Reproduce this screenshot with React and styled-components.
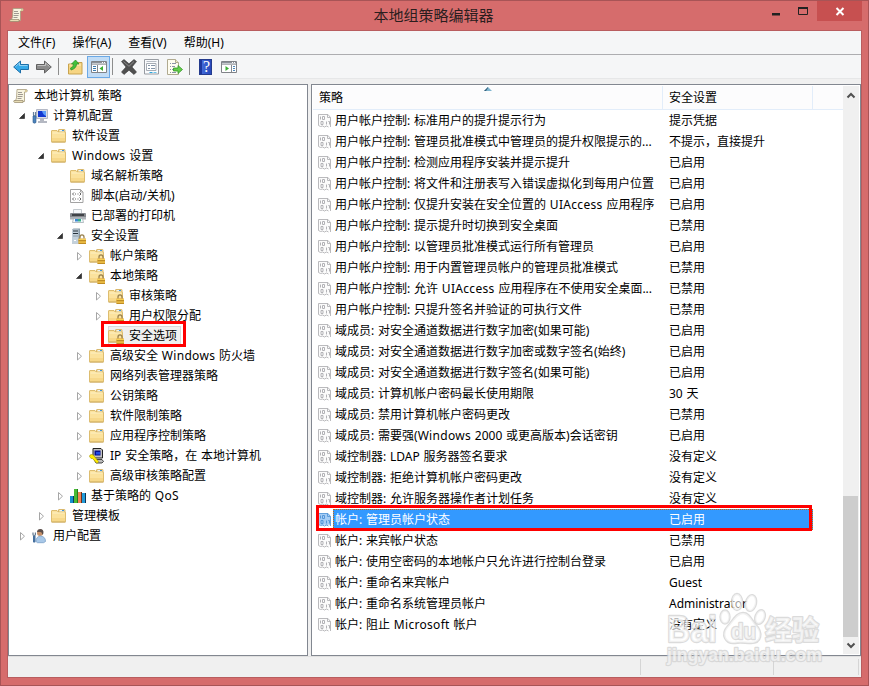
import React, { useState } from 'react';
import styled, { createGlobalStyle } from 'styled-components';

const GlobalStyle = createGlobalStyle`
    * {
        box-sizing: border-box;
    }

    body {
        margin: 0;
        overflow: hidden;
    }
`;

const Window = styled.div`
    position: relative;
    display: flex;
    flex-direction: column;
    width: 869px;
    height: 686px;
    padding: 0 6px 7px;
    background: #d66c6c;
    border: 1px solid #a85456;
    color: #000;
    font-family: "Noto Sans", "Noto Sans CJK SC", sans-serif;
    font-size: 12px;
    word-spacing: 0.7px;
    cursor: default;
`;

const TitleBar = styled.div`
    display: flex;
    flex: none;
    height: 29px;
    padding-left: 2px;
`;

const TitleIcon = styled.div`
    width: 92px;
    padding-top: 6px;
`;

const Title = styled.div`
    flex: 1;
    padding-left: 5px;
    color: #2b1e1e;
    font-size: 15px;
    line-height: 29px;
    text-align: center;
`;

const Controls = styled.div`
    display: flex;
    align-items: flex-start;
    width: 101px;
`;

const ControlButton = styled.div`
    display: flex;
    width: ${props => props.width}px;
    height: 20px;
    background: ${props => props.close ? '#c75050' : 'transparent'};
`;

const Client = styled.div`
    display: flex;
    flex: 1;
    flex-direction: column;
    min-height: 0;
    background: #f0f0f0;
    border: 1px solid #b95d5f;
`;

const MenuBar = styled.div`
    display: flex;
    flex: none;
    gap: 17px;
    height: 24px;
    padding-left: 10px;
    background: #f5f6f7;
    border-bottom: 1px solid #adadb0;
    line-height: 23px;
`;

const ToolBar = styled.div`
    display: flex;
    flex: none;
    align-items: center;
    height: 23px;
    margin-bottom: 6px;
    padding-left: 5px;
    background: #f5f6f7;
    box-shadow: 0 1px 0 #e6e7e8;
`;

const History = styled.div`
    display: flex;
    gap: 7px;
`;

const ToolButton = styled.div`
    display: flex;
    align-items: center;
    justify-content: center;
    width: 23px;
    height: 22px;
    margin-top: 1px;
    background: ${props => props.active ? '#c2dcf5' : 'transparent'};
    border: 1px solid ${props => props.active ? '#6ba9e6' : 'transparent'};
`;

const Separator = styled.div`
    width: 1px;
    height: 17px;
    margin: 0 ${props => props.right}px 0 ${props => props.left}px;
    background: #8d8d8d;
`;

const Panels = styled.div`
    display: flex;
    flex: none;
    gap: 3px;
    height: 572px;
`;

const Tree = styled.div`
    width: 300px;
    padding-top: 1px;
    background: #fff;
    border: 1px solid #828790;
`;

const TreeRow = styled.div`
    display: flex;
    align-items: center;
    height: 20px;
    padding-left: ${props => props.level ? props.level * 19 - 12 : 4}px;
`;

const Expander = styled.div`
    display: flex;
    flex: none;
    width: 16px;
    height: 16px;
`;

const TreeItem = styled.div`
    position: relative;
    display: flex;
    align-items: center;
    gap: 5px;
    height: 20px;
    line-height: 18px;
    padding-right: 4px;
    white-space: nowrap;
    background: ${props => props.selected ? '#f0f0f0' : 'transparent'};
    box-shadow: ${props => props.selected ? 'inset 0 0 0 1px #dadada' : 'none'};
`;

const Latin = styled.span`
    letter-spacing: 0.3px;
`;

// Red frame drawn over the highlighted entries
const Mark = styled.div`
    position: absolute;
    top: ${props => props.top}px;
    right: ${props => props.right}px;
    bottom: ${props => props.bottom}px;
    left: ${props => props.left}px;
    border: 3px solid #fe0000;
    pointer-events: none;
`;

const ListPanel = styled.div`
    display: flex;
    width: 550px;
    padding: 1px;
    background: #fff;
    border: 1px solid #828790;
`;

const List = styled.div`
    width: 530px;
`;

const ListHeader = styled.div`
    position: relative;
    display: flex;
    height: 24px;
    background: #fcfcfd;
    border-bottom: 1px solid #e2edfa;
    line-height: 24px;
`;

const HeaderCell = styled.div`
    width: ${props => props.width}px;
    padding-left: 6px;
    border-right: 1px solid #e2edfa;
`;

const SortMark = styled.svg`
    position: absolute;
    top: 1px;
    left: 171px;
`;

const Row = styled.div`
    position: relative;
    display: flex;
    align-items: center;
    height: 21px;
    padding-left: 5px;
    line-height: 19px;
`;

const RowBody = styled.div`
    display: flex;
    flex: none;
    align-items: center;
    width: 480px;
    height: 21px;
    margin-left: -2px;
    color: ${props => props.selected ? '#fff' : '#000'};
    background: ${props => props.selected ? '#3399ff' : 'transparent'};
    outline: ${props => props.selected ? '1px dotted #cc6600' : 'none'};
    outline-offset: -1px;
`;

const RowName = styled.div`
    width: 336px;
    padding-left: 2px;
    white-space: nowrap;
`;

const RowIcon = styled.div`
    display: flex;
    width: 17px;
    color: ${props => props.selected ? '#5597d8' : '#b2b2b6'};
    --paper: ${props => props.selected ? '#a5cdf5' : '#fbfbfb'};
`;

const ScrollBar = styled.div`
    display: flex;
    flex-direction: column;
    width: 16px;
    background: #f0f0f0;
`;

const ScrollSpace = styled.div`
    flex: 1;
`;

const Thumb = styled.div`
    width: 15px;
    height: 141px;
    background: #cdcdcd;
`;

const StatusBar = styled.div`
    display: flex;
    flex: 1;
    padding: 2px 2px 2px 0;
    border-top: 1px solid #e0e0e0;
`;

const StatusCell = styled.div`
    width: ${props => props.width}px;
    border-right: 1px solid #d5d5d5;
`;

const Watermark = styled.div`
    position: absolute;
    top: 589px;
    left: 664px;
    width: 160px;
    height: 80px;
    pointer-events: none;

    svg {
        display: block;
    }

    g {
        fill: rgba(255, 255, 255, 0.6);
        stroke: rgba(208, 208, 208, 0.75);
        stroke-width: 2.4px;
        stroke-linejoin: round;
        paint-order: stroke;
    }

    text {
        font-family: "Liberation Sans", "Noto Sans CJK SC", sans-serif;
        font-weight: bold;
        word-spacing: 0;
    }
`;

const Svg = ({ children, w = 16, h = 16 }) => (
    <svg width={w} height={h} viewBox={`0 0 ${w} ${h}`} style={{ flex: 'none', display: 'block' }}>
        {children}
    </svg>
);

const ScrollIcon = () => (
    <Svg>
        <path d="M4 1.5h9.2c1.4 0 1.7 2.5-.2 2.5h-1.5v9.5H2.2L3.500 10z" fill="#f8f4e0" stroke="#a89c7c" strokeWidth=".8" />
        <path d="M1 12.500h9v2H2c-1.200 0-1.600-1-1-2z" fill="#e8ddb5" stroke="#94876a" strokeWidth=".7" />
        <path d="M12 2h2v2h-2z" fill="#d8c997" />
        <path d="M5 4.500h4M5 6.500h5M4.500 8.500h5M4.500 10.500h4" stroke="#a09a92" />
    </Svg>
);

const FolderBase = () => (
    <>
        <path d="M7.500 4V2q0-.5.5-.5h5.500q.5 0 .5.500V5" fill="#f4e3b0" stroke="#d5b263" strokeWidth=".9" />
        <path d="M9 2h4v1.500H9z" fill="#e9f4fc" />
        <path d="M11 2.500h2" stroke="#3e95dc" />
        <path d="M.5 3q0-.5.5-.5h5l1.200 1.500H14q.5 0 .5.5v9q0 .5-.5.5H1q-.5 0-.5-.5z" fill="#fbe29d" stroke="#d9b765" strokeWidth=".9" />
        <path d="M1.500 5h12" stroke="#fdf0c4" />
        <path d="M1 10h13v3.500H1z" fill="#f7d88a" />
        <path d="M.5 14h14" stroke="#c39e4e" strokeWidth=".8" />
    </>
);

const FolderIcon = () => <Svg><FolderBase /></Svg>;

const Lock = () => (
    <>
        <path d="M10 10.500V9q0-2.200 2-2.200T14 9v1.500" fill="none" stroke="#9a8350" strokeWidth="1.300" />
        <path d="M8.500 10.500H16V16H8.500z" fill="#dca531" />
        <path d="M8.500 11.500H16M8.500 14H16" stroke="#f7cf56" />
        <path d="M8.500 15.700H16M8.500 12.700H16" stroke="#a87a1d" strokeWidth=".7" />
    </>
);

const LockFolderIcon = () => <Svg><FolderBase /><Lock /></Svg>;

const ServerIcon = () => (
    <Svg>
        <path d="M2 1.500L3.500.500H10V14l-1.500 1.500H2z" fill="#8c9daa" />
        <path d="M2 1.500h6.500v14H2z" fill="#c3d1dc" />
        <path d="M3 3h5" stroke="#26323b" />
        <path d="M3 5.500h5" stroke="#26323b" />
        <path d="M3 8h5" stroke="#8b9ba7" />
        <path d="M4 12.500h2" stroke="#fff" />
        <Lock />
    </Svg>
);

const ComputerIcon = () => (
    <Svg>
        <path d="M4.500 1.500h11v9h-11z" fill="#d9dde6" stroke="#b4b9c6" />
        <path d="M6 3h8v6H6z" fill="#1238d1" />
        <path d="M10 3h4v5q-3-1-4-5z" fill="#5c9dfa" />
        <path d="M8 11h4v2h3v2H6v-2h2z" fill="#b4b8c2" />
        <path d="M1.500 4v3q0 1 1 1t1-1V4" fill="none" stroke="#67819c" strokeWidth="1.200" />
        <path d="M1 8h3v6.500q-1.500 1.300-3 0z" fill="#4d83bb" stroke="#2e5c8d" strokeWidth=".6" />
    </Svg>
);

const ScriptIcon = () => (
    <Svg>
        <path d="M.5 1.500h10l2.500 2.500v10.500H.5z" fill="#fff" stroke="#a3a3a3" />
        <path d="M10.500 1.500V4H13" fill="none" stroke="#a3a3a3" />
        <path d="M4 4.500L2.500 6 4 7.500M9.500 4.500L11 6 9.500 7.500M5 6h1M7.500 6h1M4 9.500L2.500 11 4 12.500M9.500 9.500L11 11l-1.500 1.500M5 11h1M7.500 11h1" fill="none" stroke="#555" strokeWidth=".9" />
    </Svg>
);

const PrinterIcon = () => (
    <Svg>
        <path d="M3.500 1.500h8V6h-8z" fill="#f5f8fa" stroke="#c3c9ce" />
        <path d="M0 6q0-1 1-1h14q1 0 1 1v5H0z" fill="#85898e" />
        <path d="M2 6h12v2H2z" fill="#3f4347" />
        <path d="M0 9h16v2.500H0z" fill="#aeb3b8" />
        <path d="M3.500 10.500h9l1 4h-11z" fill="#f3fafd" stroke="#9aa3aa" strokeWidth=".7" />
        <path d="M5 11h3v2.500H5z" fill="#3b86d1" />
        <path d="M8 11h3v2.500H8z" fill="#36b089" />
    </Svg>
);

const IpIcon = () => (
    <Svg>
        <path d="M4 .500h8l1.500 1.500v8H4z" fill="#c3c3c3" stroke="#222" />
        <path d="M5.500 2.500h6v5h-6z" fill="#07108f" />
        <path d="M7 4h4v2.500H7z" fill="#214de1" />
        <path d="M5 11.500h8l1.500 2-1.500 1.500H7z" fill="#bcbcbc" stroke="#222" strokeWidth=".8" />
        <path d="M.5 8.500q0-2 2-2T5 8l4.500 5.500-1 1.500h-1l-4-4.500H2z" fill="#ffed00" stroke="#a49500" strokeWidth=".6" />
    </Svg>
);

const QosIcon = () => (
    <Svg>
        <path d="M0 8h4v7H0z" fill="#168fd1" />
        <path d="M3 8h1v7H3z" fill="#0b3960" />
        <path d="M4 1h4v14H4z" fill="#47ba35" />
        <path d="M7 1h1v14H7z" fill="#247a1d" />
        <path d="M8 4h4v11H8z" fill="#f18556" />
        <path d="M11 4h1v11h-1z" fill="#6e301b" />
        <path d="M12 5h4v10h-4z" fill="#239bd8" />
        <path d="M15 5h1v10h-1z" fill="#0a3255" />
    </Svg>
);

const UserIcon = () => (
    <Svg>
        <circle cx="8" cy="5" r="3" fill="#c89169" />
        <path d="M5 4q.3-3 3.300-3 3.700 0 3.100 4.500L10 7q.5-3-2-3z" fill="#5b4e4a" />
        <path d="M4 13.500q0-5 4.500-5.500 5 .5 5 5.500l-2 1.200h-6z" fill="#a8c8e8" stroke="#7ba0c6" strokeWidth=".8" />
        <path d="M1 4.500v2q0 1 1.200 1t1.200-1v-2" fill="none" stroke="#647b92" strokeWidth="1.200" />
        <path d="M1 8h2.500v6q-1.200 1-2.500 0z" fill="#446f9e" />
    </Svg>
);

const PolicyIcon = () => (
    <Svg>
        <path d="M.5 1.500h9.500l2.500 3v9.500l-2-1.500-2 1-2-1-2 1-4-1z" fill="var(--paper)" />
        <path d="M.5 12.500v-11H10l2.500 3v9.500M9.500 1.500v3h3M.5 12.500l2 1 2-.5 2 1 2-1 2 1" fill="none" stroke="currentColor" strokeWidth=".9" />
        <path d="M2.500 3.500v3M8.500 8.500v3M4.500 3.500h2v3h-2zM3 8.500h2v3H3zM10.300 8.500h1.200v3" fill="none" stroke="currentColor" strokeWidth="1" />
    </Svg>
);

const Arrow = ({ light, dark, flip }) => (
    <Svg>
        <g transform={flip ? 'translate(16 0) scale(-1 1)' : undefined}>
            <path d="M.7 8l6.800-6v3.500h8v5h-8V14z" fill={light} stroke={dark} />
            <path d="M2.500 7.500l4-3.500v2.500h8" fill="none" stroke="#fff" strokeOpacity=".45" />
        </g>
    </Svg>
);

const FolderUpIcon = () => (
    <Svg>
        <path d="M.5 5h6L8 3.500h6V15H.5z" fill="#f6d583" stroke="#c8a34f" />
        <path d="M1.500 6h11.500" stroke="#fdedb9" />
        <path d="M2.500 9q3-.5 3-4H3.500L7.500 1l3.500 4H8.500Q8.500 9.500 3 11z" fill="#43c23b" stroke="#258a24" strokeWidth=".7" />
    </Svg>
);

const PaneIcon = ({ right }) => (
    <Svg>
        <path d="M.5 2.500h15v11H.5z" fill="#fff" stroke="#808388" />
        <path d="M1 3h14v1.500H1z" fill="#8b9199" />
        <path d="M11 3.500h1M13 3.500h1" stroke="#fff" />
        <path d="M1 5.500h14" stroke="#b2b5b9" />
        {right ? (
            <>
                <path d="M10.500 6v7" stroke="#85898e" />
                <path d="M12 7.500h2M12 9.500h2M12 11.500h2" stroke="#4d88bb" />
                <path d="M4.500 7v5l3.500-2.500z" fill="#3daf35" />
            </>
        ) : (
            <>
                <path d="M6.500 6v7" stroke="#85898e" />
                <path d="M2 7.500h3M2 9.500h3M2 11.500h3" stroke="#3a7aaf" />
                <path d="M12 7v5L8.500 9.500z" fill="#3daf35" />
            </>
        )}
    </Svg>
);

const DeleteIcon = () => (
    <Svg>
        <path d="M.5 2.500L3 .500l5 4.300L13 .500l2.500 2L11 8l4.500 5-2.500 2.500-5-4.300-5 4.300L.5 13 5 8z" fill="#505050" stroke="#3a3a3a" strokeWidth=".6" />
        <path d="M2.500 2.500L8 7.300l5-4.800" fill="none" stroke="#8c8c8c" />
    </Svg>
);

const PropertiesIcon = () => (
    <Svg>
        <path d="M.5.500h14v14.500H.5z" fill="#fafbfd" stroke="#989ca2" />
        <path d="M2.500 4.500h9.500v7h-9.500z" fill="#fff" stroke="#a7adb5" />
        <path d="M2.500 2.500h10" stroke="#b6bcc4" />
        <path d="M4 6.500h2M7 6.500h4M4 9.500h2M7 9.500h4" stroke="#8495a8" />
        <path d="M5.500 13.500h3" stroke="#29a7e0" />
        <path d="M9.500 13.500h3" stroke="#6cc4ea" />
    </Svg>
);

const ExportIcon = () => (
    <Svg>
        <path d="M.5.500h8l3 3v12H.5z" fill="#fffdf0" stroke="#b0aa90" />
        <path d="M8.500.500v3h3" fill="#eee8c8" stroke="#b0aa90" />
        <path d="M3 4.500h1M5 4.500h4M3 7.500h1M5 7.500h3M3 10.500h1M5 10.500h2M3 13.500h1M5 13.500h4" stroke="#8d93a8" />
        <path d="M6.500 9H11V6.500l4.500 4-4.500 4V12H6.500z" fill="#65ce4a" stroke="#34972a" strokeWidth=".8" />
    </Svg>
);

const HelpGlyph = styled.div`
    width: 13px;
    height: 16px;
    background: linear-gradient(90deg, #1e379d 2px, #4169d8 2px, #2849ba);
    border: 1px solid #243b8d;
    color: #fff;
    font: 16px/14px "Liberation Serif", serif;
    text-align: center;
    text-indent: 2px;
`;

const tree = [
    [0, '', ScrollIcon, '本地计算机 策略'],
    [1, 'open', ComputerIcon, '计算机配置'],
    [2, '', FolderIcon, '软件设置'],
    [2, 'open', FolderIcon, 'Windows 设置'],
    [3, '', FolderIcon, '域名解析策略'],
    [3, '', ScriptIcon, '脚本(启动/关机)'],
    [3, '', PrinterIcon, '已部署的打印机'],
    [3, 'open', ServerIcon, '安全设置'],
    [4, 'closed', LockFolderIcon, '帐户策略'],
    [4, 'open', LockFolderIcon, '本地策略'],
    [5, 'closed', LockFolderIcon, '审核策略'],
    [5, 'closed', LockFolderIcon, '用户权限分配'],
    [5, '', LockFolderIcon, '安全选项'],
    [4, 'closed', FolderIcon, '高级安全 Windows 防火墙'],
    [4, '', FolderIcon, '网络列表管理器策略'],
    [4, 'closed', FolderIcon, '公钥策略'],
    [4, 'closed', FolderIcon, '软件限制策略'],
    [4, 'closed', FolderIcon, '应用程序控制策略'],
    [4, 'closed', IpIcon, 'IP 安全策略，在 本地计算机'],
    [4, 'closed', FolderIcon, '高级审核策略配置'],
    [3, 'closed', QosIcon, '基于策略的 QoS'],
    [2, 'closed', FolderIcon, '管理模板'],
    [1, 'closed', UserIcon, '用户配置'],
];

const policies = [
    ['用户帐户控制: 标准用户的提升提示行为', '提示凭据'],
    ['用户帐户控制: 管理员批准模式中管理员的提升权限提示的...', '不提示，直接提升'],
    ['用户帐户控制: 检测应用程序安装并提示提升', '已启用'],
    ['用户帐户控制: 将文件和注册表写入错误虚拟化到每用户位置', '已启用'],
    ['用户帐户控制: 仅提升安装在安全位置的 UIAccess 应用程序', '已启用'],
    ['用户帐户控制: 提示提升时切换到安全桌面', '已禁用'],
    ['用户帐户控制: 以管理员批准模式运行所有管理员', '已启用'],
    ['用户帐户控制: 用于内置管理员帐户的管理员批准模式', '已禁用'],
    ['用户帐户控制: 允许 UIAccess 应用程序在不使用安全桌面...', '已禁用'],
    ['用户帐户控制: 只提升签名并验证的可执行文件', '已禁用'],
    ['域成员: 对安全通道数据进行数字加密(如果可能)', '已启用'],
    ['域成员: 对安全通道数据进行数字加密或数字签名(始终)', '已启用'],
    ['域成员: 对安全通道数据进行数字签名(如果可能)', '已启用'],
    ['域成员: 计算机帐户密码最长使用期限', '30 天'],
    ['域成员: 禁用计算机帐户密码更改', '已禁用'],
    ['域成员: 需要强(Windows 2000 或更高版本)会话密钥', '已启用'],
    ['域控制器: LDAP 服务器签名要求', '没有定义'],
    ['域控制器: 拒绝计算机帐户密码更改', '没有定义'],
    ['域控制器: 允许服务器操作者计划任务', '没有定义'],
    ['帐户: 管理员帐户状态', '已启用'],
    ['帐户: 来宾帐户状态', '已禁用'],
    ['帐户: 使用空密码的本地帐户只允许进行控制台登录', '已启用'],
    ['帐户: 重命名来宾帐户', 'Guest'],
    ['帐户: 重命名系统管理员帐户', 'Administrator'],
    ['帐户: 阻止 Microsoft 帐户', '没有定义'],
];

// Mixed case words are set slightly wider than the rest of the label
const Label = ({ text }) => (
    <span>
        {text.split(/([A-Z]+[a-z]\w*)/).map((part, i) => i % 2 ? <Latin key={i}>{part}</Latin> : part)}
    </span>
);

const PolicyTree = () => (
    <Tree>
        {tree.map(([level, state, Icon, name]) => (
            <TreeRow key={name} level={level}>
                {level > 0 && (
                    <Expander>
                        <Svg>
                            {state === 'open' && <path d="M8.500 5.500v5H3.500z" fill="#333" stroke="#1d1d1d" strokeWidth=".6" />}
                            {state === 'closed' && <path d="M4.500 4.500v7.500L8.500 8.200z" fill="#fff" stroke="#a6a6a6" />}
                        </Svg>
                    </Expander>
                )}
                <TreeItem selected={name === '安全选项'}>
                    <Icon />
                    <Label text={name} />
                    {name === '安全选项' && <Mark top={-5} right={-5} bottom={-1} left={-7} />}
                </TreeItem>
            </TreeRow>
        ))}
    </Tree>
);

const PolicyList = () => {
    const [selected, setSelected] = useState(19);

    return (
        <ListPanel>
            <List>
                <ListHeader>
                    <HeaderCell width={350}>策略</HeaderCell>
                    <HeaderCell width={150}>安全设置</HeaderCell>
                    <SortMark width="8" height="4">
                        <path d="M0 4l4-4 4 4z" fill="#7fb5cf" />
                        <path d="M0 4l4-4v1L2 4z" fill="#355f7a" />
                    </SortMark>
                </ListHeader>
                {policies.map(([name, value], i) => (
                    <Row key={name} onClick={() => setSelected(i)}>
                        <RowIcon selected={selected === i}><PolicyIcon /></RowIcon>
                        <RowBody selected={selected === i}>
                            <RowName><Label text={name} /></RowName>
                            {value}
                        </RowBody>
                        {selected === i && <Mark top={-4} right={31} bottom={-1} left={3} />}
                    </Row>
                ))}
            </List>
            <ScrollBar>
                <Svg h={17}><path d="M4.500 11.500L8 8l3.500 3.500" fill="none" stroke="#505050" strokeWidth="2" /></Svg>
                <ScrollSpace />
                <Thumb />
                <Svg h={17}><path d="M4.500 6.500L8 10l3.500-3.500" fill="none" stroke="#505050" strokeWidth="2" /></Svg>
            </ScrollBar>
        </ListPanel>
    );
};

const App = () => (
    <Window>
        <GlobalStyle />
        <TitleBar>
            <TitleIcon><ScrollIcon /></TitleIcon>
            <Title>本地组策略编辑器</Title>
            <Controls>
                <ControlButton width={28}>
                    <Svg w={28} h={20}><path d="M11 12h8v2.500h-8z" fill="#222" /></Svg>
                </ControlButton>
                <ControlButton width={28}>
                    <Svg w={28} h={20}>
                        <path d="M9.500 6.500h9v7h-9z" fill="none" stroke="#222" />
                        <path d="M9 7h10" stroke="#222" strokeWidth="2" />
                    </Svg>
                </ControlButton>
                <ControlButton width={45} close>
                    <Svg w={45} h={20}><path d="M19.500 7l7 7M26.500 7l-7 7" stroke="#fff" strokeWidth="2" /></Svg>
                </ControlButton>
            </Controls>
        </TitleBar>
        <Client>
            <MenuBar>
                <span>文件(F)</span>
                <span>操作(A)</span>
                <span>查看(V)</span>
                <span>帮助(H)</span>
            </MenuBar>
            <ToolBar>
                <History>
                    <Arrow light="#35a9e8" dark="#1c6ea8" />
                    <Arrow light="#8b8b8b" dark="#606060" flip />
                </History>
                <Separator left={6} right={5} />
                <ToolButton><FolderUpIcon /></ToolButton>
                <ToolButton active><PaneIcon /></ToolButton>
                <Separator left={2} right={4} />
                <ToolButton><DeleteIcon /></ToolButton>
                <ToolButton><PropertiesIcon /></ToolButton>
                <ToolButton><ExportIcon /></ToolButton>
                <Separator left={3} right={4} />
                <ToolButton><HelpGlyph>?</HelpGlyph></ToolButton>
                <ToolButton><PaneIcon right /></ToolButton>
            </ToolBar>
            <Panels>
                <PolicyTree />
                <PolicyList />
            </Panels>
            <StatusBar>
                <StatusCell width={633} />
                <StatusCell width={133} />
                <StatusCell width={85} />
            </StatusBar>
        </Client>
        <Watermark>
            <svg width="160" height="80" viewBox="0 0 160 80">
                <g>
                    <ellipse cx="60" cy="27" rx="4.500" ry="6.500" />
                    <ellipse cx="72" cy="12" rx="5" ry="8" />
                    <ellipse cx="86" cy="13" rx="5" ry="8" transform="rotate(12 86 13)" />
                    <ellipse cx="95" cy="27" rx="4.500" ry="7" transform="rotate(20 95 27)" />
                    <path d="M78 23c6 0 8 6 12 11 9 9 6 19-4 19-6 0-11-1-16 0-9 1-15-8-7-17 5-5 8-13 15-13z" />
                    <text x="2" y="52" fontSize="36" textLength="50" lengthAdjust="spacingAndGlyphs">Bai</text>
                    <text x="66" y="49" fontSize="22" textLength="25" lengthAdjust="spacingAndGlyphs">du</text>
                    <text x="100" y="50" fontSize="27">经验</text>
                    <text x="2" y="71" fontSize="18" textLength="155" lengthAdjust="spacingAndGlyphs">jingyan.baidu.com</text>
                </g>
            </svg>
        </Watermark>
    </Window>
);

export default App;
